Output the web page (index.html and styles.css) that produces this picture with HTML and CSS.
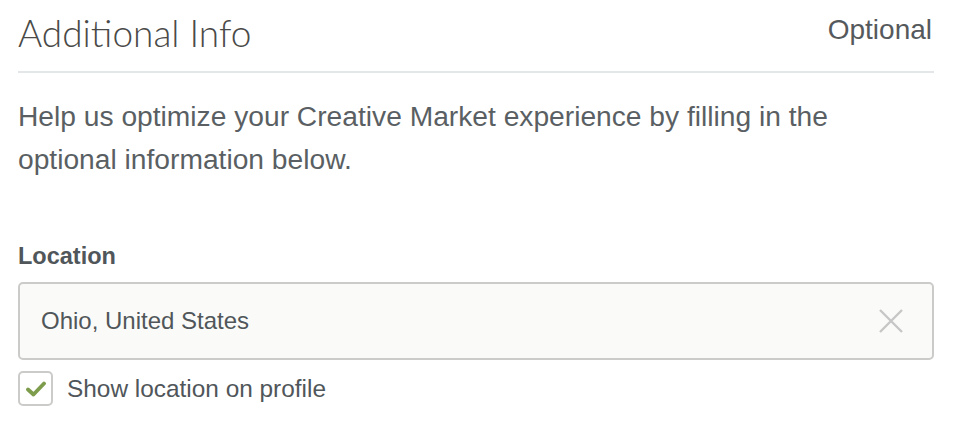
FILE: index.html
```html
<!DOCTYPE html>
<html lang="en">
<head>
    <meta charset="UTF-8">
    <meta name="viewport" content="width=device-width, initial-scale=1.0">
    <title>Additional Info</title>
    <link rel="stylesheet" href="styles.css">
</head>
<body>
    <div class="panel">
        <div class="panel-head">
            <h2>Additional Info</h2>
            <span class="optional">Optional</span>
        </div>
        <p class="intro">Help us optimize your Creative Market experience by filling in the optional information below.</p>

        <div class="field">
            <label for="location">Location</label>
            <div class="input-wrap">
                <input type="text" id="location" value="Ohio, United States">
                <!-- clear button -->
                <button class="clear" type="button" aria-label="Clear">
                    <svg width="26" height="26" viewBox="0 0 26 26">
                        <path d="M2 2 L24 24 M24 2 L2 24" stroke="#c6c6c6" stroke-width="2.4" fill="none"/>
                    </svg>
                </button>
            </div>
            <div class="check-row">
                <span class="checkbox">
                    <svg width="20" height="16" viewBox="0 0 20 16">
                        <path d="M2 8.5 L7.5 13.5 L18 2.5" stroke="#7d9c4c" stroke-width="3.8" fill="none" stroke-linecap="round" stroke-linejoin="round"/>
                    </svg>
                </span>
                <span class="check-label">Show location on profile</span>
            </div>
        </div>
    </div>
</body>
</html>
```

FILE: styles.css
```css
body {
    margin: 0;
    background: #fff;
    font-family: "Liberation Sans", Arial, sans-serif;
    color: #565b5f;
}
.panel {
    padding: 0 20px 0 18px;
}
.panel-head {
    display: flex;
    justify-content: space-between;
    align-items: flex-start;
    border-bottom: 2px solid #e4e7e7;
    height: 71px;
}
.panel-head h2 {
    margin: 9px 0 0;
    font-family: "Lato", sans-serif;
    font-weight: 300;
    font-size: 37px;
    line-height: 48px;
    color: #4a4a48;
}
.optional {
    margin-top: 9px;
    margin-right: 2px;
    font-size: 28px;
    line-height: 42px;
    color: #55595c;
}
.intro {
    max-width: 860px;
    margin: 22px 0 0;
    font-size: 28.2px;
    line-height: 43px;
    color: #5a5f63;
}
.field {
    margin-top: 62px;
}
.field label {
    display: block;
    font-size: 23.5px;
    font-weight: bold;
    line-height: 26px;
    color: #50565a;
}
.input-wrap {
    position: relative;
    margin-top: 13px;
}
.input-wrap input {
    box-sizing: border-box;
    width: 100%;
    height: 78px;
    padding: 0 60px 0 21px;
    border: 2px solid #cbcbc9;
    border-radius: 5px;
    background: #fafbf8;
    font-family: "Liberation Sans", Arial, sans-serif;
    font-size: 24px;
    color: #50565a;
    outline: none;
}
.clear {
    position: absolute;
    right: 30px;
    top: 26px;
    padding: 0;
    border: 0;
    background: none;
    cursor: pointer;
}
.check-row {
    display: flex;
    align-items: center;
    margin-top: 11px;
}
.checkbox {
    box-sizing: border-box;
    display: flex;
    align-items: center;
    justify-content: center;
    width: 35px;
    height: 35px;
    border: 2px solid #cbcbc9;
    border-radius: 5px;
    background: #fff;
}
.check-label {
    margin-left: 14px;
    font-size: 24.4px;
    color: #50565a;
}
```
